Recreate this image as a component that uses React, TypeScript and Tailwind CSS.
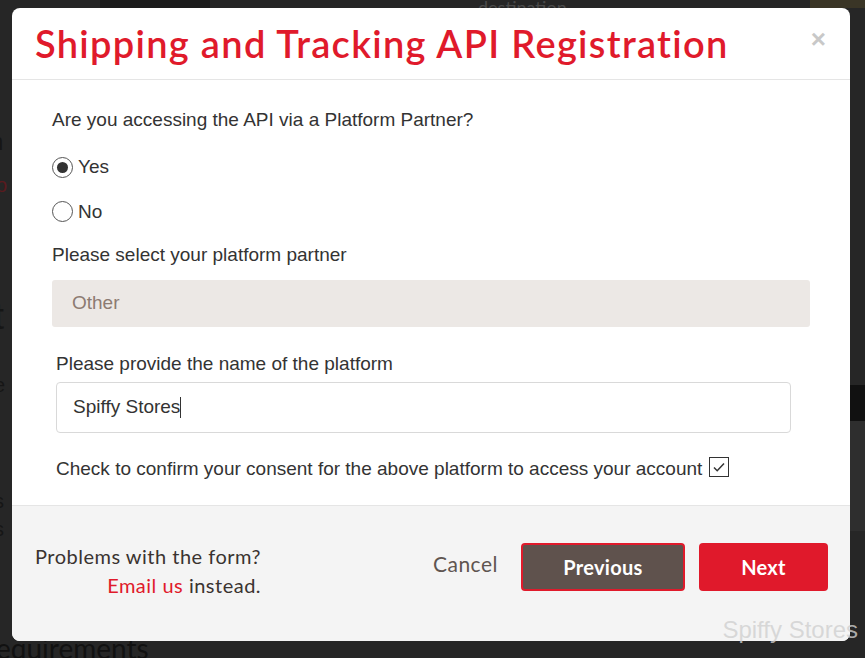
import React from "react";

const geo = { fontFamily: "Lato, 'Noto Sans', sans-serif" };
const arial = { fontFamily: "'Liberation Sans', Arial, sans-serif" };

const Radio = ({ checked, label }: { checked?: boolean; label: string }) => (
  <label className="flex items-center gap-[5px] text-[19px] text-[#333]">
    <span className="w-[21px] h-[21px] rounded-full border border-[#555] bg-white flex items-center justify-center">
      {checked && <span className="w-[11px] h-[11px] rounded-full bg-[#333]" />}
    </span>
    {label}
  </label>
);

export default function App() {
  return (
    <div className="relative w-[865px] h-[658px] bg-[#262626] overflow-hidden" style={arial}>
      {/* page behind the overlay */}
      <div className="flex h-[8px]">
        <div className="ml-[100px] w-[110px] bg-[#1c1c1c]" />
        <div className="ml-[600px] w-[55px] bg-[#3a3526]" />
      </div>
      <p className="absolute left-[478px] -top-[6px] text-[18px] text-[#4a4a4a]" style={geo}>destination</p>
      <p className="absolute -left-[10px] top-[124px] text-[24px] text-[#161616]">n</p>
      <p className="absolute -left-[4px] top-[170px] text-[20px] text-[#5a1a1e]">o</p>
      <p className="absolute -left-[6px] top-[290px] text-[36px] text-[#161616]">t</p>
      <p className="absolute -left-[6px] top-[370px] text-[20px] text-[#161616]">e</p>
      <p className="absolute -left-[6px] top-[486px] text-[20px] text-[#161616]">s</p>
      <p className="absolute -left-[6px] top-[514px] text-[20px] text-[#161616]">s</p>
      <div className="absolute right-0 top-[385px] w-[15px] h-[36px] bg-[#111]" />
      <div className="absolute right-0 top-[421px] w-[15px] h-[110px] bg-[#2e2e2e]" />
      <p className="absolute -left-[4px] top-[634px] text-[28px] leading-none text-[#111]" style={geo}>equirements</p>

      {/* modal */}
      <div className="absolute left-[12px] top-[8px] w-[838px] h-[633px] rounded-[8px] bg-white overflow-hidden flex flex-col">
        <div className="h-[72px] border-b border-[#e5e5e5] flex items-center justify-between pl-[23px] pr-[24px]">
          <h1 className="text-[38px] font-semibold text-[#e01a2b] tracking-[1.3px] -mt-[1px]" style={geo}>
            Shipping and Tracking API Registration
          </h1>
          <span className="text-[26px] font-bold text-[#c8c8c8] leading-none -mt-[10px]">×</span>
        </div>

        <div className="flex-1 px-[40px] pt-[29px]">
          <p className="text-[19px] text-[#333] leading-[22px]">Are you accessing the API via a Platform Partner?</p>
          <div className="mt-[22px] flex flex-col gap-[16px]">
            <Radio checked label="Yes" />
            <Radio label="No" />
          </div>
          <p className="mt-[18px] text-[19px] text-[#333] leading-[22px]">Please select your platform partner</p>
          <div className="mt-[14px] h-[47px] w-[758px] rounded-[3px] bg-[#ece8e5] flex items-center pl-[20px] text-[19px] text-[#8c7b72]">
            Other
          </div>
          <div className="pl-[4px] pr-[19px]">
            <p className="mt-[26px] text-[19px] text-[#333] leading-[22px]">
              Please provide the name of the platform
            </p>
            <div className="mt-[7px] h-[51px] rounded-[4px] border border-[#d9d9d9] flex items-center pl-[16px] text-[19px] text-[#333]">
              Spiffy Stores<span className="w-px h-[21px] bg-[#333]" />
            </div>
            <div className="mt-[22px] flex items-center gap-[7px] text-[19px] text-[#333]">
              Check to confirm your consent for the above platform to access your account
              <span className="w-[20px] h-[20px] border border-[#333] flex items-center justify-center -mt-[4px]">
                <svg width="16" height="16" viewBox="0 0 16 16" fill="none" stroke="#333" strokeWidth="1.5">
                  <path d="M3 8.5l3.2 3.2L13 4.5" />
                </svg>
              </span>
            </div>
          </div>
        </div>

        <div className="h-[136px] border-t border-[#e5e5e5] bg-[#f4f4f4] flex items-center pl-[23px] pr-[22px] pb-[12px]" style={geo}>
          <div className="text-right text-[20px] tracking-[0.5px] leading-[29px] text-[#3a3330] mt-[6px]">
            <p>Problems with the form?</p>
            <p>
              <span className="text-[#e01a2b]">Email us</span> instead.
            </p>
          </div>
          <div className="ml-auto flex items-center -mt-[2px]">
            <button className="text-[21px] tracking-[0.5px] text-[#5f5550] -mt-[6px] mr-[23px]">Cancel</button>
            <button className="w-[164px] h-[48px] rounded-[4px] border-2 border-[#e01a2b] bg-[#5f524d] text-white text-[20px] tracking-[0.3px] font-bold">
              Previous
            </button>
            <button className="ml-[14px] w-[129px] h-[48px] rounded-[4px] bg-[#e0192b] text-white text-[20px] tracking-[0.3px] font-bold">
              Next
            </button>
          </div>
        </div>
      </div>

      <p className="absolute right-[7px] top-[618px] text-[24px] text-[#d0d0d0]/80 leading-none">Spiffy Stores</p>
    </div>
  );
}
